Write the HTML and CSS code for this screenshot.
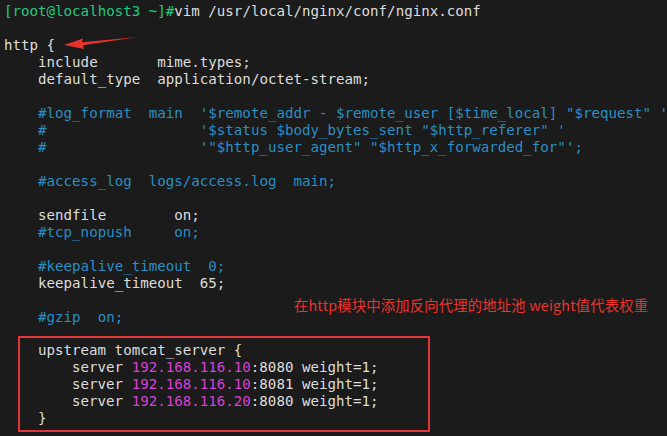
FILE: index.html
```html
<!DOCTYPE html>
<html lang="en">
<head>
<meta charset="UTF-8">
<title>nginx.conf</title>
<link rel="stylesheet" href="styles.css">
</head>
<body>
    <div class="terminal">
<pre class="code"><span class="prompt">[root@localhost3 ~]#</span>vim /usr/local/nginx/conf/nginx.conf

http {
    include       mime.types;
    default_type  application/octet-stream;

<span class="comment">    #log_format  main  '$remote_addr - $remote_user [$time_local] "$request" '</span>
<span class="comment">    #                  '$status $body_bytes_sent "$http_referer" '</span>
<span class="comment">    #                  '"$http_user_agent" "$http_x_forwarded_for"';</span>

<span class="comment">    #access_log  logs/access.log  main;</span>

    sendfile        on;
<span class="comment">    #tcp_nopush     on;</span>

<span class="comment">    #keepalive_timeout  0;</span>
    keepalive_timeout  65;

<span class="comment">    #gzip  on;</span></pre>
<pre class="code upstream">upstream tomcat_server {
    server <span class="ip">192.168.116.10</span>:8080 weight=1;
    server <span class="ip">192.168.116.10</span>:8081 weight=1;
    server <span class="ip">192.168.116.20</span>:8080 weight=1;
}</pre>

        <div class="note">在http模块中添加反向代理的地址池 weight值代表权重</div>

        <svg class="arrow" width="80" height="20" viewBox="0 0 80 20">
            <path d="M76 3 L20 8.3 L21 4.5 L2 11 L22 15 L21 11.2 Z" fill="#e8322c"/>
        </svg>
    </div>
</body>
</html>
```

FILE: styles.css
```css
body {
    margin: 0;
    padding: 0;
    background-color: #1b1b1b;
    overflow: hidden;
}
.terminal {
    position: relative;
    width: 667px;
    height: 436px;
    padding: 3px 0 0 4px;
    box-sizing: border-box;
    overflow: hidden;
}
.code {
    margin: 0;
    font-family: "DejaVu Sans Mono", monospace;
    font-size: 14.15px;
    line-height: 17px;
    color: #dedede;
    white-space: pre;
}
.prompt {
    color: #22c982;
}
.comment {
    color: #2a8fc4;
}
.ip {
    color: #d641d6;
}
.upstream {
    width: 374px;
    margin: 10px 0 0 14px;
    padding: 4px 16px 3px 18px;
    border: 2px solid #e2363a;
}
.note {
    position: absolute;
    left: 294px;
    top: 295px;
    font-family: "Noto Sans CJK SC", sans-serif;
    font-size: 14.3px;
    letter-spacing: 0.2px;
    line-height: 20px;
    color: #e8332e;
}
.arrow {
    position: absolute;
    left: 62px;
    top: 34px;
}
```
